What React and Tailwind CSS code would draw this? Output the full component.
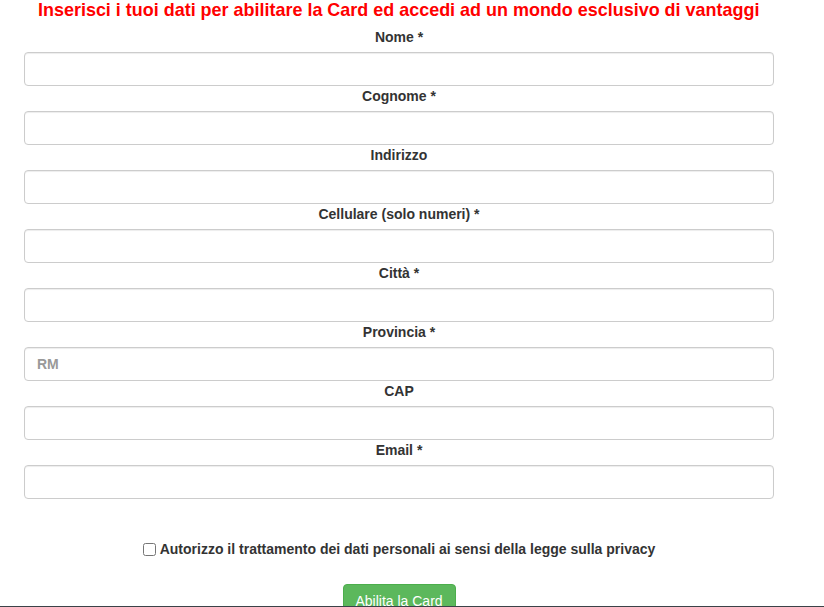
import React from "react";

const fields = [
  { label: "Nome *" },
  { label: "Cognome *" },
  { label: "Indirizzo" },
  { label: "Cellulare (solo numeri) *" },
  { label: "Città *" },
  { label: "Provincia *", placeholder: "RM" },
  { label: "CAP" },
  { label: "Email *" },
];

export default function App() {
  return (
    <div
      className="relative h-[607px] overflow-hidden bg-white text-[#333]"
      style={{ fontFamily: '"Liberation Sans", Arial, sans-serif' }}
    >
      <h1 className="ml-[24px] flex h-[27px] w-[750px] justify-center text-[19px] font-bold leading-[20px] text-[#ff0000]">
        <span className="inline-block origin-center scale-x-[0.945] whitespace-nowrap">
          Inserisci i tuoi dati per abilitare la Card ed accedi ad un mondo esclusivo di vantaggi
        </span>
      </h1>
      <div className="ml-[24px] w-[750px]">
        {fields.map((f) => (
          <div key={f.label} className="flex flex-col">
            <label className="mb-[5px] block text-center text-[14px] font-bold leading-[20px]">
              {f.label}
            </label>
            <input
              type="text"
              placeholder={f.placeholder || ""}
              className="h-[34px] w-full rounded-[4px] border border-[#ccc] px-[12px] text-[14px] font-bold shadow-[inset_0_1px_1px_rgba(0,0,0,0.075)] outline-none placeholder:text-[#999]"
            />
          </div>
        ))}
        <div className="mt-[40px] flex items-center justify-center gap-[4px] text-[14px] font-bold leading-[20px]">
          <input type="checkbox" className="h-[13px] w-[13px]" />
          <span>Autorizzo il trattamento dei dati personali ai sensi della legge sulla privacy</span>
        </div>
        <div className="mt-[25px] flex justify-center">
          <button className="h-[34px] w-[113px] rounded-[4px] border border-[#4cae4c] bg-[#5cb85c] text-[14px] leading-[20px] text-white">
            Abilita la Card
          </button>
        </div>
      </div>
      <div className="absolute bottom-0 left-0 h-px w-full bg-[#3b4248]" />
    </div>
  );
}
